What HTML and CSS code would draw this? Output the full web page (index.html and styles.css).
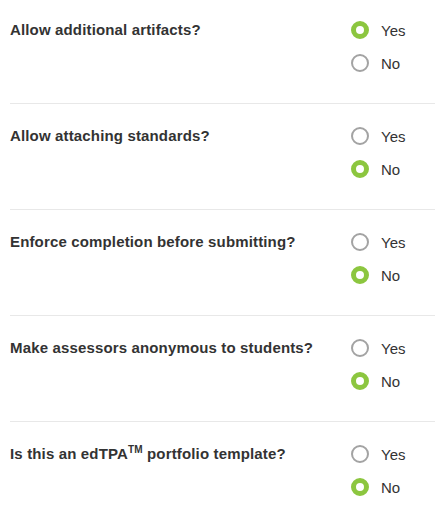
FILE: index.html
```html
<!DOCTYPE html>
<html>
<head>
<meta charset="utf-8">
<link rel="stylesheet" href="styles.css">
</head>
<body>
<div class="settings">
  <div class="row">
    <div class="question">Allow additional artifacts?</div>
    <div class="options">
      <label class="option"><span class="radio checked"></span><span class="label">Yes</span></label>
      <label class="option"><span class="radio"></span><span class="label">No</span></label>
    </div>
  </div>
  <div class="row">
    <div class="question">Allow attaching standards?</div>
    <div class="options">
      <label class="option"><span class="radio"></span><span class="label">Yes</span></label>
      <label class="option"><span class="radio checked"></span><span class="label">No</span></label>
    </div>
  </div>
  <div class="row">
    <div class="question">Enforce completion before submitting?</div>
    <div class="options">
      <label class="option"><span class="radio"></span><span class="label">Yes</span></label>
      <label class="option"><span class="radio checked"></span><span class="label">No</span></label>
    </div>
  </div>
  <div class="row">
    <div class="question">Make assessors anonymous to students?</div>
    <div class="options">
      <label class="option"><span class="radio"></span><span class="label">Yes</span></label>
      <label class="option"><span class="radio checked"></span><span class="label">No</span></label>
    </div>
  </div>
  <div class="row last">
    <div class="question">Is this an edTPA<sup class="tm">TM</sup> portfolio template?</div>
    <div class="options">
      <label class="option"><span class="radio"></span><span class="label">Yes</span></label>
      <label class="option"><span class="radio checked"></span><span class="label">No</span></label>
    </div>
  </div>
</div>
</body>
</html>
```
FILE: styles.css
```css
html, body {
  margin: 0;
  padding: 0;
  background: #ffffff;
}
body {
  font-family: "Liberation Sans", Arial, Helvetica, sans-serif;
  color: #333333;
}
.settings {
  padding-left: 10px;
}
.row {
  display: flex;
  align-items: flex-start;
  justify-content: space-between;
  padding: 15px 0 24px 0;
  border-bottom: 1px solid #e8e8e8;
}
.row:first-child {
  padding-top: 13px;
}
.row.last {
  border-bottom: none;
}
.question {
  font-size: 15px;
  font-weight: bold;
  line-height: 33px;
  letter-spacing: 0.15px;
  color: #333333;
}
.tm {
  font-size: 10px;
  line-height: 0;
  vertical-align: 0;
  position: relative;
  top: -6px;
}
.options {
  width: 84px;
  display: flex;
  flex-direction: column;
}
.option {
  display: flex;
  align-items: center;
  height: 33px;
}
.radio {
  box-sizing: border-box;
  width: 18px;
  height: 18px;
  border-radius: 50%;
  border: 2px solid #a3a3a3;
  background: #ffffff;
  flex: none;
}
.radio.checked {
  border: 5.5px solid #8cc63f;
  background: #ffffff;
}
.label {
  font-size: 15px;
  color: #333333;
  margin-left: 12px;
  margin-top: 2px;
}
```
